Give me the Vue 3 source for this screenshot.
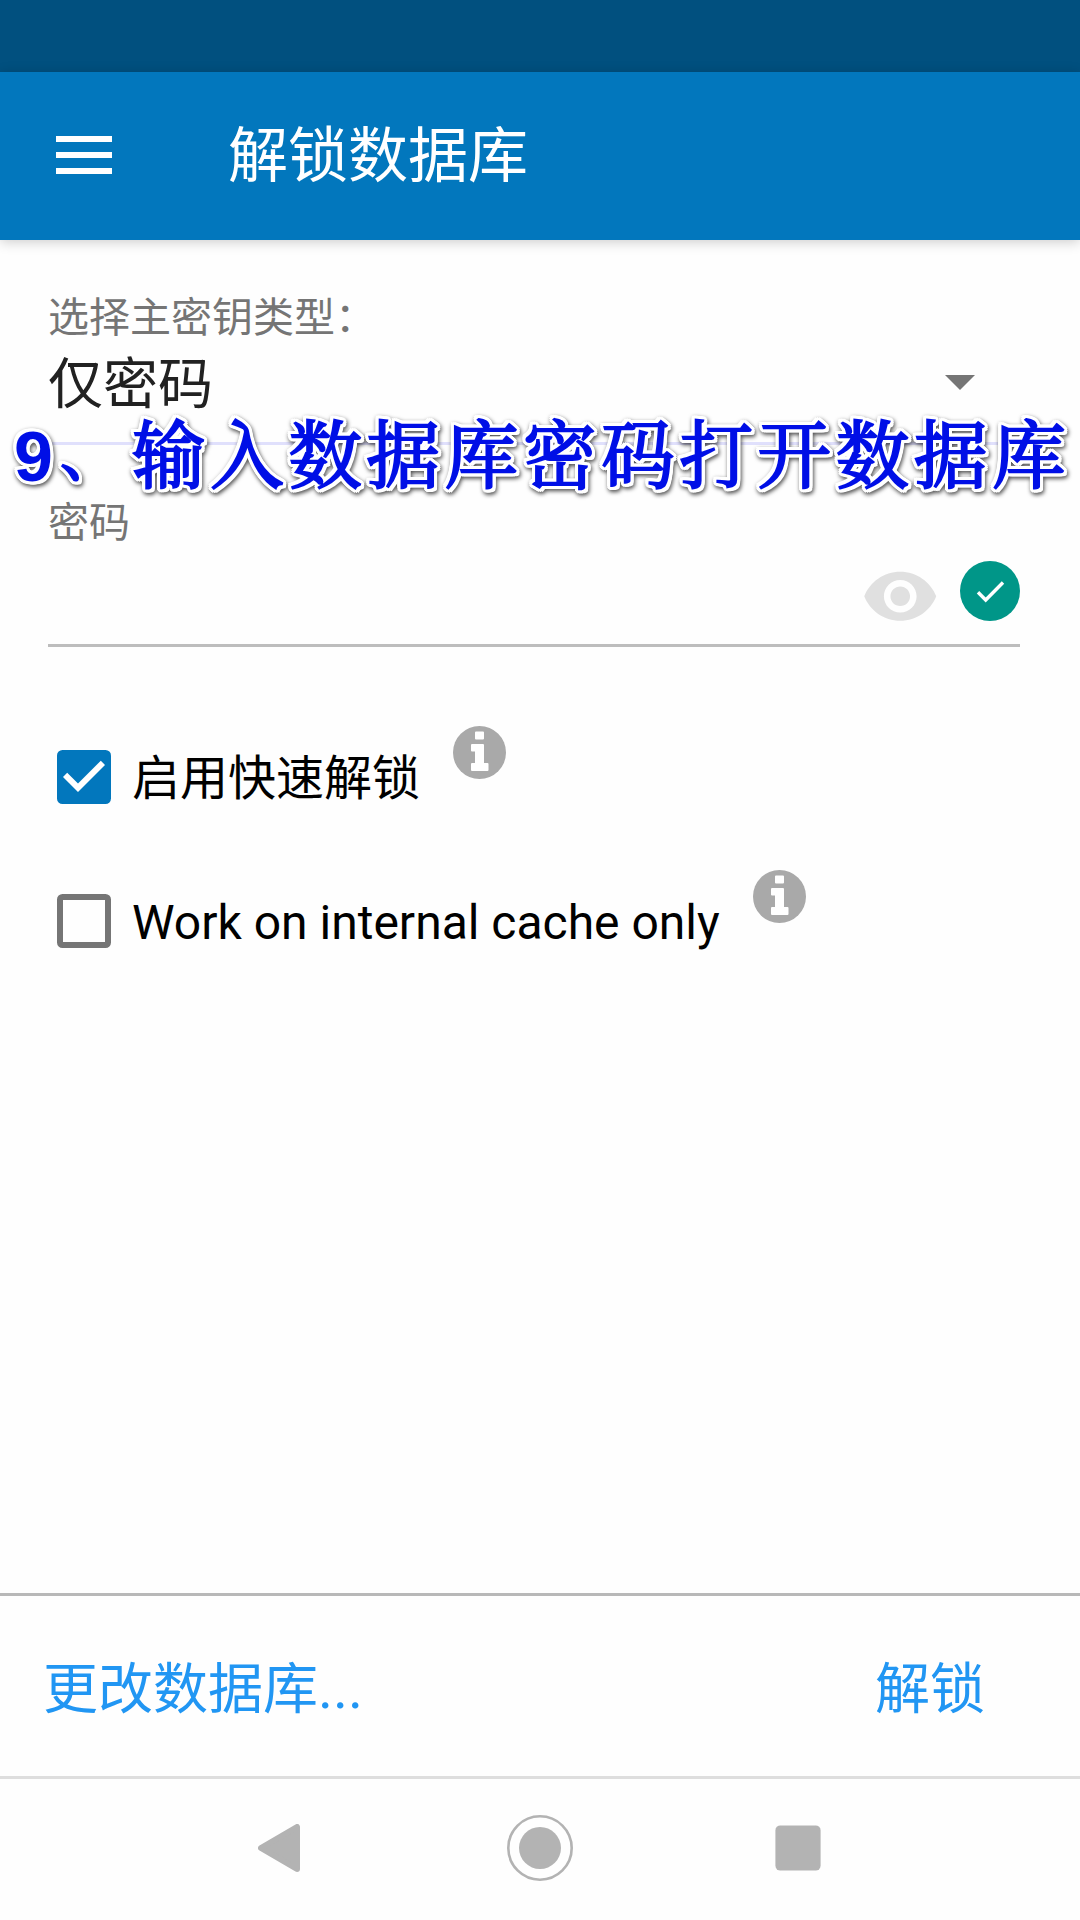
<script setup>
const options = [
  { label: '启用快速解锁', checked: true },
  { label: 'Work on internal cache only', checked: false, latin: true },
]
</script>

<template>
  <div class="screen">
    <div class="status"></div>
    <header class="bar">
      <div class="menu"><i></i><i></i><i></i></div>
      <h1 class="title">解锁数据库</h1>
    </header>

    <main class="content">
      <div class="label">选择主密钥类型：</div>
      <div class="spinner">
        <span class="value">仅密码</span>
        <svg class="caret" width="30" height="15" viewBox="0 0 30 15"><path d="M0 0h30L15 15z" fill="#757575" /></svg>
      </div>
      <div class="rule"></div>
      <div class="label password-label">密码</div>
      <div class="field">
        <svg class="eye" width="78.5" height="78.5" viewBox="0 0 24 24">
          <path fill="#e0e0e0" d="M12 4.5C7 4.5 2.73 7.61 1 12c1.73 4.39 6 7.5 11 7.5s9.27-3.11 11-7.5c-1.73-4.39-6-7.5-11-7.5zM12 17c-2.76 0-5-2.24-5-5s2.24-5 5-5 5 2.24 5 5-2.24 5-5 5zm0-8c-1.66 0-3 1.34-3 3s1.34 3 3 3 3-1.34 3-3-1.34-3-3-3z" />
        </svg>
        <svg class="ok" width="60" height="60" viewBox="0 0 60 60">
          <circle cx="30" cy="30" r="30" fill="#009688" />
          <path d="M18 31.3l7.7 7.7L43 21.5" fill="none" stroke="#fff" stroke-width="3.4" />
        </svg>
      </div>

      <div v-for="o in options" :key="o.label" class="option">
        <svg class="box" width="54" height="54" viewBox="0 0 54 54">
          <template v-if="o.checked">
            <rect width="54" height="54" rx="5.5" fill="#0277bd" />
            <path fill="#fff" d="M21 42L6 27l4.2-4.2L21 33.5l22.8-22.8L48 15z" />
          </template>
          <rect v-else x="3" y="3" width="48" height="48" rx="2.5" fill="none" stroke="#757575" stroke-width="6" />
        </svg>
        <span class="option-text" :class="{ latin: o.latin }">{{ o.label }}</span>
        <svg class="info" width="53" height="53" viewBox="0 0 53 53">
          <circle cx="26.5" cy="26.5" r="26.5" fill="#a9a9a9" />
          <path fill="#fff" d="M23 5.500h7a1 1 0 0 1 1 1v6a1 1 0 0 1-1 1h-7a1 1 0 0 1-1-1v-6a1 1 0 0 1 1-1zM19 18h11a1 1 0 0 1 1 1v18h3.500a1 1 0 0 1 1 1v6a1 1 0 0 1-1 1H19a1 1 0 0 1-1-1v-6a1 1 0 0 1 1-1h3V25.500h-3a1 1 0 0 1-1-1V19a1 1 0 0 1 1-1z" />
        </svg>
      </div>
    </main>

    <footer class="actions">
      <span>更改数据库<span class="dots">...</span></span>
      <span>解锁</span>
    </footer>

    <nav class="nav">
      <svg width="42" height="48" viewBox="0 0 42 48"><path d="M3 24L39 3v42z" fill="#b3b3b3" stroke="#b3b3b3" stroke-width="6" stroke-linejoin="round" /></svg>
      <svg class="home" width="66" height="66" viewBox="0 0 66 66">
        <circle cx="33" cy="33" r="31.700" fill="none" stroke="#b3b3b3" stroke-width="2.600" />
        <circle cx="33" cy="33" r="21" fill="#b3b3b3" />
      </svg>
      <svg width="46" height="46" viewBox="0 0 46 46"><rect x=".4" y=".4" width="45.200" height="45.200" rx="5" fill="#b3b3b3" /></svg>
    </nav>

    <div class="caption"><b>9</b><span class="comma">、</span><span class="words">输入数据库密码打开数据库</span></div>
  </div>
</template>

<style>
body {
  margin: 0;
  background: #fefefe;
}
</style>

<style scoped>
.screen {
  position: relative;
  display: flex;
  flex-direction: column;
  width: 1080px;
  height: 1920px;
  overflow: hidden;
  background: #fefefe;
  font-family: "Noto Sans CJK SC", Roboto, sans-serif;
  white-space: nowrap;
}
svg {
  display: block;
  flex: none;
}
.status {
  height: 72px;
  background: #01507f;
}
.bar {
  display: flex;
  align-items: center;
  height: 168px;
  box-sizing: border-box;
  padding-left: 56px;
  background: #0277bd;
  box-shadow: 0 2px 12px rgba(0, 0, 0, 0.2);
}
.menu {
  display: flex;
  flex-direction: column;
  gap: 10px;
  width: 56px;
  margin-top: -2px;
}
.menu i {
  height: 6px;
  background: #fff;
}
.title {
  margin: 0 0 11px 116px;
  font-size: 60px;
  line-height: 80px;
  font-weight: 400;
  color: #fff;
}
.content {
  display: flex;
  flex-direction: column;
  flex: 1;
  padding: 50px 60px 0 48px;
}
.label {
  font-size: 41px;
  line-height: 48px;
  color: #757575;
}
.spinner {
  display: flex;
  align-items: center;
  justify-content: space-between;
  height: 64px;
  margin-top: 10px;
  padding-right: 45px;
  font-size: 55px;
  line-height: 64px;
  color: #212121;
}
.value {
  margin-top: -2px;
}
.caret {
  margin-top: 5px;
}
.rule {
  height: 3px;
  margin-top: 30px;
  background: #e0e0fc;
}
.password-label {
  margin-top: 50px;
}
.field {
  display: flex;
  justify-content: flex-end;
  align-items: flex-start;
  height: 101px;
  margin-bottom: 103px;
  border-bottom: 3px solid #bdbdbd;
}
.eye {
  margin: 13.700px 20.700px 0 0;
}
.ok {
  margin-top: 18px;
}
.option {
  display: flex;
  align-items: center;
  height: 54px;
  margin-bottom: 90px;
  padding-left: 9px;
}
.option-text {
  margin-left: 21px;
  margin-top: -6px;
  font-size: 48px;
  line-height: 56px;
  color: #000;
}
.option-text.latin {
  margin-top: 4px;
  font-family: Roboto, sans-serif;
}
.info {
  margin: -49px 0 0 33px;
}
.actions {
  display: flex;
  align-items: center;
  justify-content: space-between;
  height: 186px;
  box-sizing: border-box;
  padding: 0 95px 4px 43px;
  border-top: 3px solid #b8b8b8;
  border-bottom: 3px solid #dedede;
  font-size: 55px;
  line-height: 72px;
  color: #2196f3;
}
.dots {
  font-family: Roboto, sans-serif;
  font-size: 57px;
  line-height: 1px;
}
.nav {
  display: flex;
  align-items: center;
  justify-content: space-between;
  height: 141px;
  box-sizing: border-box;
  padding: 0 259px 3px 258px;
}
.home {
  margin-left: 4px;
}
.caption {
  position: absolute;
  left: 14px;
  top: 407px;
  display: flex;
  align-items: center;
  height: 100px;
  line-height: 100px;
  color: #000fe6;
  /* hard white outline, then a soft dark shadow under it */
  filter: drop-shadow(2px 0 0 #fff) drop-shadow(-2px 0 0 #fff) drop-shadow(0 2px 0 #fff)
    drop-shadow(0 -2px 0 #fff) drop-shadow(1px 1px 0 #fff) drop-shadow(-1px -1px 0 #fff)
    drop-shadow(1px 2px 2px rgba(0, 0, 0, 0.7));
}
.caption b {
  width: 39px;
  font-family: "Liberation Sans", sans-serif;
  font-size: 70px;
}
.comma,
.words {
  font-family: "Noto Serif CJK SC", "Noto Sans CJK SC", serif;
  font-weight: 400;
  -webkit-text-stroke: 2.200px #000fe6;
}
.comma {
  width: 72px;
  margin: -14px 0 0 7px;
  font-size: 62px;
}
.words {
  margin-top: -14px;
  font-size: 73.500px;
  letter-spacing: 4.700px;
}
</style>
